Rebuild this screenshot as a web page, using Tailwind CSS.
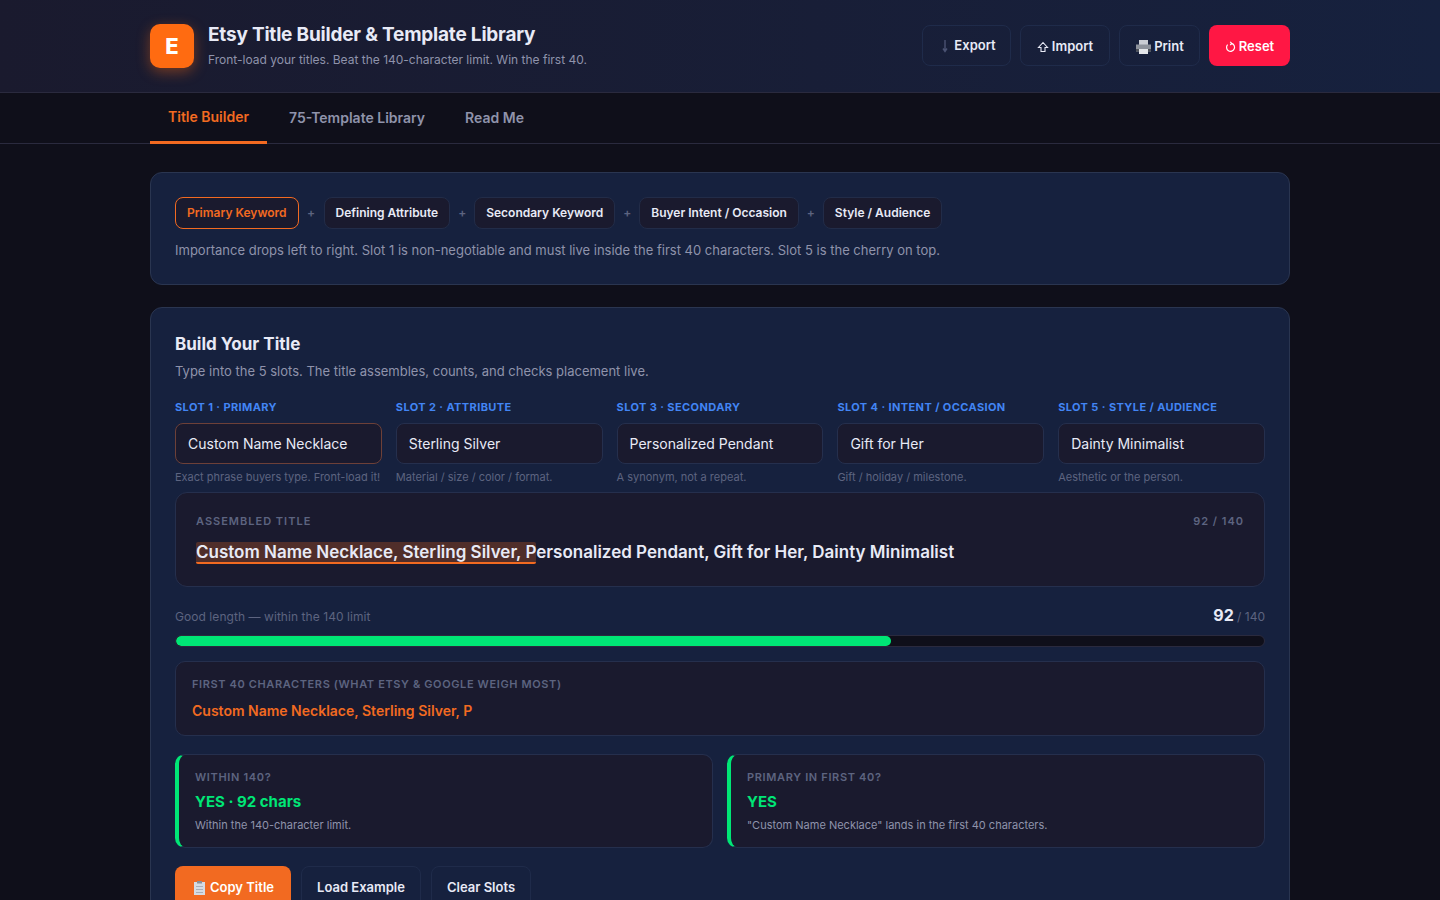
<!DOCTYPE html>
<html lang="en">
<head>
    <meta charset="UTF-8">
    <title>Etsy Title Builder &amp; Template Library</title>
    <script src="https://cdn.jsdelivr.net/npm/@tailwindcss/browser@4"></script>
</head>
<body class="bg-[#0f0f1a] text-[#e8eaf6] font-['Inter',sans-serif] h-[900px] overflow-hidden">
    <!-- header -->
    <header class="h-[93px] border-b border-[#2a2a3e] bg-gradient-to-r from-[#1a1a2e] to-[#16213e]">
        <div class="w-[1140px] mx-auto h-full flex items-center justify-between">
            <div class="flex items-center gap-[14px]">
                <div class="w-11 h-11 rounded-[10px] bg-[#ff6b11] flex items-center justify-center text-[22px] font-extrabold text-white shadow-[0_4px_14px_rgba(255,107,17,0.4)]">E</div>
                <div>
                    <h1 class="text-[19px] leading-[24px] font-bold tracking-[-0.2px] text-[#e8eaf6]">Etsy Title Builder &amp; Template Library</h1>
                    <p class="text-xs leading-[18px] mt-1 text-[#8f93ab]">Front-load your titles. Beat the 140-character limit. Win the first 40.</p>
                </div>
            </div>
            <div class="flex items-center gap-[9px] mb-[1px]">
                <button class="h-[41px] w-[89px] pl-[5px] rounded-lg border border-[#1f2b4a] text-[13px] font-semibold text-[#e8eaf6] flex items-center justify-center gap-[6px]">
                    <svg width="6" height="14" viewBox="0 0 6 14" fill="none" stroke="#4a5272" stroke-width="1.4"><path d="M3 1v11M1 9.5 3 12.5 5 9.5"/></svg>Export
                </button>
                <button class="h-[41px] w-[90px] pt-[2px] rounded-lg border border-[#1f2b4a] text-[13px] font-semibold text-[#e8eaf6] flex items-center justify-center gap-[3px]">
                    <svg width="12" height="12" viewBox="0 0 12 12" fill="none" stroke="#e8eaf6" stroke-width="1.1"><path d="M6 1.5 1.5 6.5H4V10.5H8V6.5H10.5Z"/></svg>Import
                </button>
                <button class="h-[41px] w-[81px] pt-[2px] rounded-lg border border-[#1f2b4a] text-[13px] font-semibold text-[#e8eaf6] flex items-center justify-center gap-[2px]">
                    <svg width="17" height="16" viewBox="0 0 17 16"><path fill="#c9ccd4" d="M4 1h9v5H4z"/><path fill="#8d929c" d="M1 5.5h15v7H1z"/><path fill="#4c5058" d="M1 10h15v2.5H1z"/><path fill="#e4e6ea" d="M4 10h9v5H4z"/></svg>Print
                </button>
                <button class="h-[41px] w-[81px] pt-[2px] rounded-lg bg-[#ff1744] text-[13px] font-semibold text-white flex items-center justify-center gap-[3px]">
                    <svg width="11" height="12" viewBox="0 0 11 12" fill="none" stroke="#fff" stroke-width="1.2"><path d="M6.5 2.4A4 4 0 1 1 2.6 3.6M5.2.8 6.8 2.4 5.2 4"/></svg>Reset
                </button>
            </div>
        </div>
    </header>

    <!-- tabs -->
    <nav class="h-[51px] bg-[#0f0f1a] border-b border-[#2a2a3e]">
        <div class="w-[1140px] mx-auto h-full flex text-sm font-semibold text-[#8f93ab]">
            <a class="h-[51px] w-[117px] flex items-center justify-center border-b-[3px] border-[#f26a21] text-[#f26a21]">Title Builder</a>
            <a class="h-[49px] ml-[22px] flex items-center">75-Template Library</a>
            <a class="h-[49px] ml-10 flex items-center">Read Me</a>
        </div>
    </nav>

    <main class="w-[1140px] mx-auto pt-7">
        <!-- formula -->
        <section class="h-[113px] rounded-xl bg-[#16213e] border border-[#2a3550] px-6 pt-6">
            <div class="flex items-center text-xs font-semibold text-[#e8eaf6]">
                <span class="h-8 px-[11px] flex items-center rounded-lg bg-[#1a1a2e] border border-[#f26a21] text-[#f26a21]">Primary Keyword</span>
                <span class="w-[25px] text-center text-[#5d6480]">+</span>
                <span class="h-8 px-[11px] flex items-center rounded-lg bg-[#1a1a2e] border border-[#222c48]">Defining Attribute</span>
                <span class="w-6 text-center text-[#5d6480]">+</span>
                <span class="h-8 px-[11px] flex items-center rounded-lg bg-[#1a1a2e] border border-[#222c48]">Secondary Keyword</span>
                <span class="w-6 text-center text-[#5d6480]">+</span>
                <span class="h-8 px-[11px] flex items-center rounded-lg bg-[#1a1a2e] border border-[#222c48]">Buyer Intent / Occasion</span>
                <span class="w-6 text-center text-[#5d6480]">+</span>
                <span class="h-8 px-[11px] flex items-center rounded-lg bg-[#1a1a2e] border border-[#222c48]">Style / Audience</span>
            </div>
            <p class="mt-[11px] text-[13px] leading-5 text-[#8f93ab]">Importance drops left to right. Slot 1 is non-negotiable and must live inside the first 40 characters. Slot 5 is the cherry on top.</p>
        </section>

        <!-- builder -->
        <section class="mt-[22px] h-[700px] rounded-xl bg-[#16213e] border border-[#2a3550] px-6 pt-6">
            <h2 class="text-[17px] leading-6 font-bold text-[#e8eaf6]">Build Your Title</h2>
            <p class="mt-[5px] text-[13px] leading-5 text-[#8f93ab]">Type into the 5 slots. The title assembles, counts, and checks placement live.</p>

            <div class="mt-[19px] grid grid-cols-5 gap-[14px]">
                <div>
                    <div class="text-[11px] leading-[15px] font-bold tracking-[0.4px] uppercase text-[#4285f4]">Slot 1 · Primary</div>
                    <div class="mt-2 h-[41px] px-3 flex items-center rounded-lg bg-[#1a1a2e] border border-[#6d4038] text-sm text-[#e8eaf6]">Custom Name Necklace</div>
                    <div class="mt-[6px] text-[11px] leading-[15px] text-[#5d6480]">Exact phrase buyers type. Front-load it!</div>
                </div>
                <div>
                    <div class="text-[11px] leading-[15px] font-bold tracking-[0.4px] uppercase text-[#4285f4]">Slot 2 · Attribute</div>
                    <div class="mt-2 h-[41px] px-3 flex items-center rounded-lg bg-[#1a1a2e] border border-[#252f4d] text-sm text-[#e8eaf6]">Sterling Silver</div>
                    <div class="mt-[6px] text-[11px] leading-[15px] text-[#5d6480]">Material / size / color / format.</div>
                </div>
                <div>
                    <div class="text-[11px] leading-[15px] font-bold tracking-[0.4px] uppercase text-[#4285f4]">Slot 3 · Secondary</div>
                    <div class="mt-2 h-[41px] px-3 flex items-center rounded-lg bg-[#1a1a2e] border border-[#252f4d] text-sm text-[#e8eaf6]">Personalized Pendant</div>
                    <div class="mt-[6px] text-[11px] leading-[15px] text-[#5d6480]">A synonym, not a repeat.</div>
                </div>
                <div>
                    <div class="text-[11px] leading-[15px] font-bold tracking-[0.4px] uppercase text-[#4285f4]">Slot 4 · Intent / Occasion</div>
                    <div class="mt-2 h-[41px] px-3 flex items-center rounded-lg bg-[#1a1a2e] border border-[#252f4d] text-sm text-[#e8eaf6]">Gift for Her</div>
                    <div class="mt-[6px] text-[11px] leading-[15px] text-[#5d6480]">Gift / holiday / milestone.</div>
                </div>
                <div>
                    <div class="text-[11px] leading-[15px] font-bold tracking-[0.4px] uppercase text-[#4285f4]">Slot 5 · Style / Audience</div>
                    <div class="mt-2 h-[41px] px-3 flex items-center rounded-lg bg-[#1a1a2e] border border-[#252f4d] text-sm text-[#e8eaf6]">Dainty Minimalist</div>
                    <div class="mt-[6px] text-[11px] leading-[15px] text-[#5d6480]">Aesthetic or the person.</div>
                </div>
            </div>

            <!-- assembled -->
            <div class="mt-[7px] h-[95px] rounded-xl bg-[#1a1a2e] border border-[#252f4d] px-5 pt-[20px]">
                <div class="flex justify-between text-[11px] leading-4 font-semibold tracking-[1px] text-[#5d6480]">
                    <span class="uppercase">Assembled Title</span><span>92 / 140</span>
                </div>
                <div class="mt-[11px] text-[17px] leading-[25px] font-semibold text-[#e8eaf6]"><span class="bg-[#f26a21]/25 border-b-2 border-[#f26a21] rounded-[2px]">Custom Name Necklace, Sterling Silver, P</span>ersonalized Pendant, Gift for Her, Dainty Minimalist</div>
            </div>

            <!-- counter -->
            <div class="mt-[18px] flex items-end justify-between">
                <span class="text-xs leading-5 tracking-[0.06px] text-[#5d6480]">Good length — within the 140 limit</span>
                <span class="text-xs leading-5 text-[#5d6480]"><b class="text-[16px] font-bold text-[#e8eaf6]">92</b> / 140</span>
            </div>
            <div class="mt-2 h-3 rounded-full bg-[#0f0f1a] border border-[#2a2a3e] overflow-hidden">
                <div class="h-full rounded-full bg-[#00e676]" style="width: 65.7%"></div>
            </div>

            <!-- first 40 -->
            <div class="mt-[14px] h-[75px] rounded-[10px] bg-[#1a1a2e] border border-[#252f4d] px-4 pt-[14px]">
                <div class="text-[11px] leading-4 font-semibold tracking-[0.62px] uppercase text-[#5d6480]">First 40 characters (what Etsy &amp; Google weigh most)</div>
                <div class="mt-[9px] text-sm leading-5 font-semibold text-[#f26a21]">Custom Name Necklace, Sterling Silver, P</div>
            </div>

            <!-- checks -->
            <div class="mt-[18px] grid grid-cols-2 gap-[14px]">
                <div class="h-[94px] rounded-[10px] bg-[#1a1a2e] border border-[#252f4d] border-l-4 border-l-[#00e676] px-4 pt-[14px]">
                    <div class="text-[11px] leading-4 font-semibold tracking-[0.65px] uppercase text-[#5d6480]">Within 140?</div>
                    <div class="mt-[6px] text-[15px] leading-[22px] font-bold text-[#00e676]">YES · 92 chars</div>
                    <div class="mt-1 text-[11px] leading-4 text-[#8f93ab]">Within the 140-character limit.</div>
                </div>
                <div class="h-[94px] rounded-[10px] bg-[#1a1a2e] border border-[#252f4d] border-l-4 border-l-[#00e676] px-4 pt-[14px]">
                    <div class="text-[11px] leading-4 font-semibold tracking-[0.65px] uppercase text-[#5d6480]">Primary in first 40?</div>
                    <div class="mt-[6px] text-[15px] leading-[22px] font-bold text-[#00e676]">YES</div>
                    <div class="mt-1 text-[11px] leading-4 text-[#8f93ab]">"Custom Name Necklace" lands in the first 40 characters.</div>
                </div>
            </div>

            <!-- actions -->
            <div class="mt-[18px] flex gap-[10px] text-[13px] font-semibold">
                <button class="h-[42px] w-[116px] pt-[2px] rounded-lg bg-[#f26a21] text-white flex items-center justify-center gap-[3px]">
                    <svg width="15" height="16" viewBox="0 0 15 16"><path fill="#d5dbe3" d="M2 2h11v13H2z"/><path fill="#8a8f98" d="M5 1h5v2.5H5z"/><path fill="#a9afb9" d="M4 6h7v1H4zM4 9h7v1H4zM4 12h7v1H4z"/></svg>Copy Title
                </button>
                <button class="h-[42px] w-[120px] pt-[2px] rounded-lg border border-[#1f2b4a] text-[#e8eaf6]">Load Example</button>
                <button class="h-[42px] w-[100px] pt-[2px] rounded-lg border border-[#1f2b4a] text-[#e8eaf6]">Clear Slots</button>
            </div>
        </section>
    </main>
</body>
</html>
